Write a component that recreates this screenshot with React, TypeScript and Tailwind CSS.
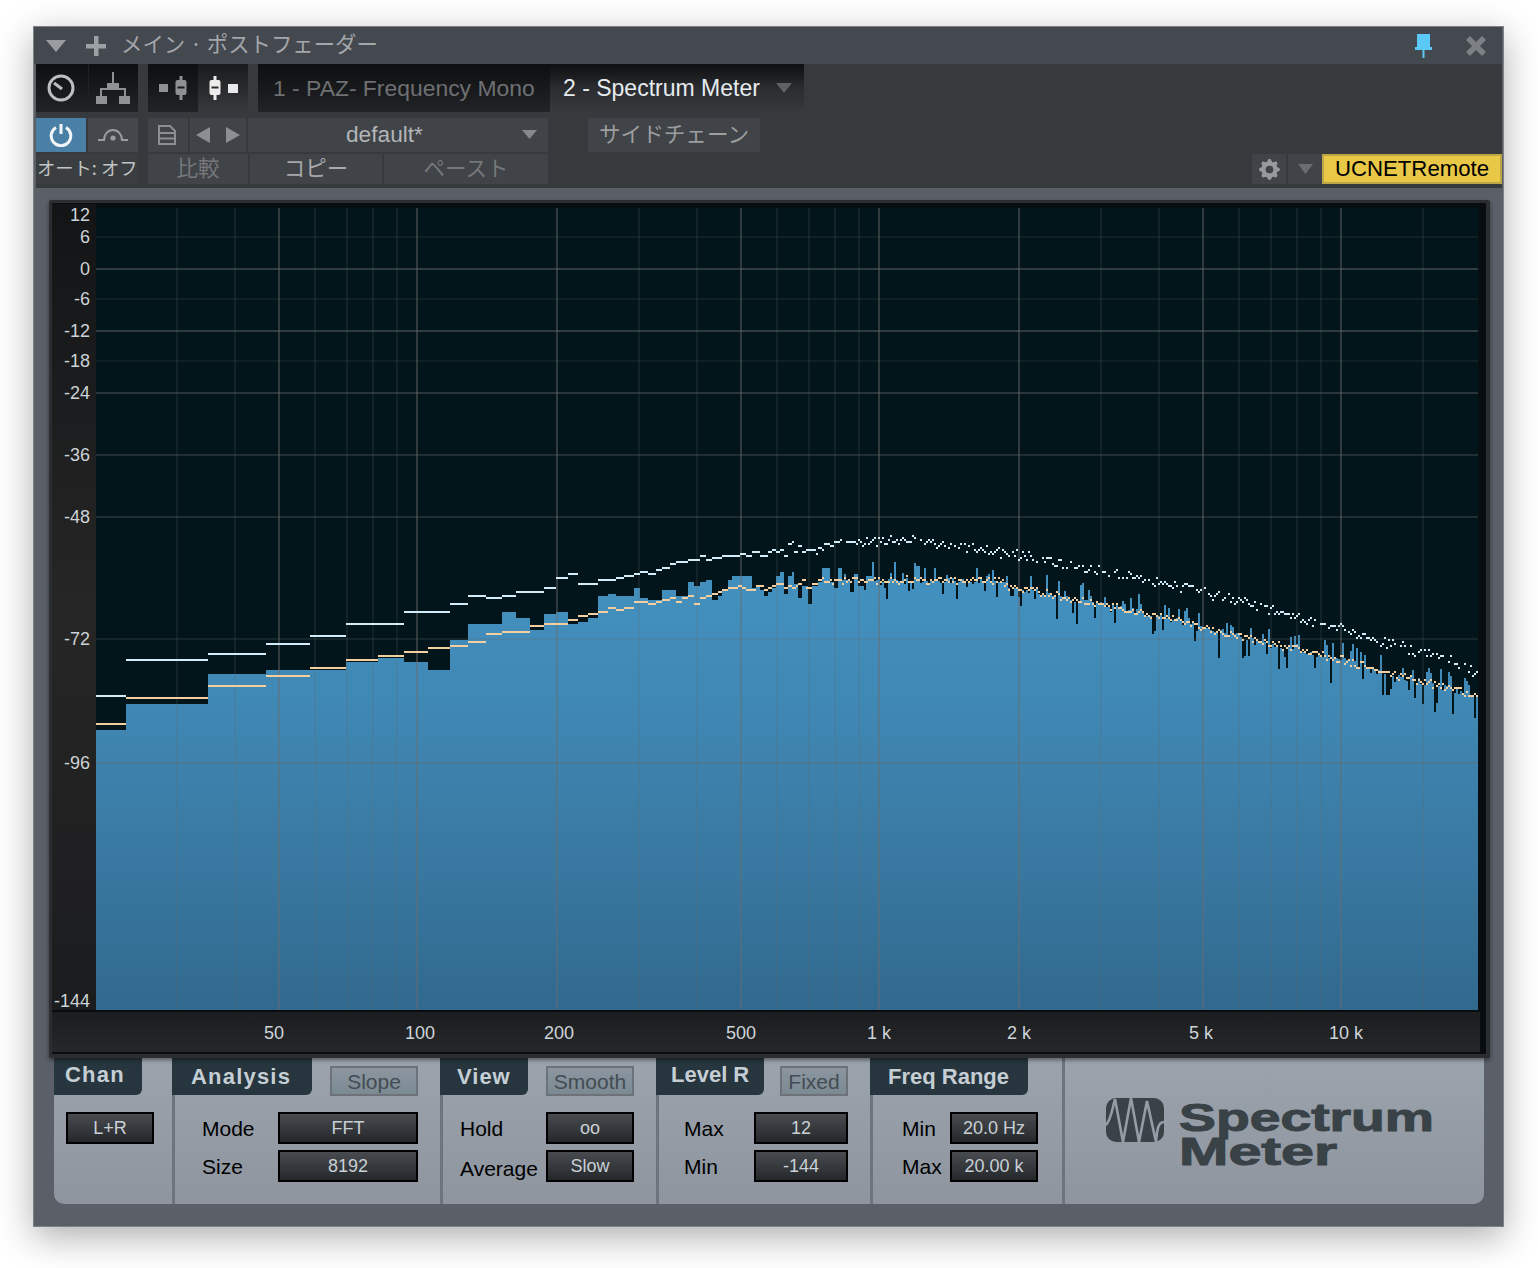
import React from "react";
import { BsGearFill } from "react-icons/bs";

const SANS = "font-[Liberation_Sans,Arial,sans-serif]";
const CJK = "font-[Noto_Sans_CJK_JP,Liberation_Sans,sans-serif]";

type Seg = [number, number];
// [end x, y] step data read from the plot; x starts at 96
const BLUE: Seg[] = [
  [126, 730], [208, 704], [266, 674], [346, 670], [378, 662], [404, 658], [428, 662], [450, 670], [468, 640],
  [502, 624], [516, 612], [530, 618], [540, 630], [544, 630], [556, 614], [568, 612], [578, 624], [588, 622],
  [598, 618], [608, 596], [616, 594], [634, 596], [640, 588], [648, 598], [662, 600], [676, 590], [688, 596],
  [694, 582], [700, 586], [706, 582], [712, 580], [718, 600], [722, 596], [728, 590], [732, 580], [752, 576],
  [756, 588], [760, 586], [764, 590], [768, 596], [772, 592], [776, 588], [780, 576], [784, 572], [788, 594],
  [792, 576], [794, 572], [796, 584], [798, 584], [802, 598], [806, 586], [808, 586], [812, 604], [818, 586],
  [822, 582], [826, 568], [828, 568], [830, 568], [834, 582], [836, 588], [838, 588], [840, 568], [842, 568],
  [844, 580], [846, 574], [850, 580], [854, 592], [858, 574], [860, 586], [864, 586], [866, 590], [872, 576],
];
const WHITE: Seg[] = [
  [126, 695], [208, 659], [266, 653], [310, 643], [346, 635], [404, 623], [450, 611], [468, 603], [486, 595],
  [502, 597], [516, 595], [540, 591], [544, 591], [556, 587], [568, 577], [578, 573], [598, 583], [616, 579],
  [624, 577], [634, 575], [640, 573], [648, 571], [656, 573], [662, 569], [670, 567], [676, 563], [688, 561],
  [700, 559], [706, 555], [712, 559], [722, 557], [740, 555], [746, 553], [752, 555], [760, 551], [768, 555],
  [772, 551], [776, 549], [780, 551], [784, 549], [788, 555], [792, 543], [794, 541], [798, 551], [802, 545],
  [806, 551], [816, 549], [818, 553], [822, 547], [824, 549], [830, 543], [834, 545], [840, 541], [842, 539],
];
const ORANGE: Seg[] = [
  [126, 723], [208, 697], [266, 685], [310, 675], [346, 667], [378, 659], [404, 655], [428, 651], [450, 647],
  [468, 645], [486, 641], [502, 633], [530, 631], [540, 625], [544, 625], [556, 623], [568, 623], [578, 619],
  [588, 615], [598, 613], [608, 611], [616, 607], [624, 609], [634, 607], [648, 601], [656, 603], [662, 601],
  [670, 599], [676, 597], [682, 601], [688, 597], [694, 595], [700, 603], [706, 597], [712, 595], [718, 593],
  [722, 591], [728, 589], [738, 587], [742, 585], [746, 587], [756, 589], [764, 585], [768, 589], [772, 587],
  [776, 585], [784, 583], [788, 587], [792, 585], [796, 587], [798, 585], [802, 583], [806, 579], [812, 587],
  [818, 583], [822, 579], [824, 577], [828, 581],
];

function stepPath(segs: Seg[], h: number) {
  let d = "";
  let x = 96;
  for (const [end, y] of segs) {
    d += `M${x} ${y}H${end}V${y + h}H${x}Z`;
    x = end;
  }
  return d;
}

function rng(seed: number) {
  let a = seed;
  return () => {
    a = (a + 0x6d2b79f5) | 0;
    let t = Math.imul(a ^ (a >>> 15), 1 | a);
    t = (t + Math.imul(t ^ (t >>> 7), 61 | t)) ^ t;
    return ((t ^ (t >>> 14)) >>> 0) / 4294967296;
  };
}

function lerp(pts: number[][], x: number) {
  for (let i = 1; i < pts.length; i++) {
    if (x <= pts[i][0]) {
      const [x0, y0] = pts[i - 1];
      const [x1, y1] = pts[i];
      return y0 + ((y1 - y0) * (x - x0)) / (x1 - x0);
    }
  }
  return pts[pts.length - 1][1];
}

const orangeCurve = [[820, 581], [880, 578], [1000, 579], [1010, 585], [1090, 600], [1170, 617], [1250, 637], [1330, 655], [1410, 677], [1478, 694]];
const whiteCurve = [[830, 545], [890, 537], [960, 546], [1010, 552], [1090, 566], [1170, 583], [1250, 602], [1290, 613], [1330, 625], [1370, 635], [1410, 648], [1450, 658], [1478, 673]];

function snap(v: number) {
  return Math.round(v / 2) * 2 + 1;
}

const r = rng(7);
let blueTail = "";
let orangeTail = "";
let whiteTail = "";
for (let x = 872; x < 1478; x += 2) {
  const o = lerp(orangeCurve, x);
  let top = o + r() * 6 - 1;
  const k = r();
  if (k < 0.24) top = o - 3 - r() * 14;
  else if (k < 0.46) top = o + 5 + r() * (x > 1050 ? 24 : 16);
  const y = Math.round(top);
  blueTail += `M${x} ${y}H${x + 2}V1010H${x}Z`;
}
for (let x = 828; x < 1478; x += 2) {
  const o = lerp(orangeCurve, x);
  const y = snap(o + (r() - 0.5) * 7);
  orangeTail += `M${x} ${y}h2v2h-2Z`;
}
for (let x = 842; x < 1478; x += 2) {
  if (r() < 0.15) continue;
  const w = lerp(whiteCurve, x);
  const y = snap(w + (r() - 0.5) * 10);
  whiteTail += `M${x} ${y}h2v2h-2Z`;
}

let bluePath = "";
{
  let x = 96;
  for (const [end, y] of BLUE) {
    bluePath += `M${x} ${y}H${end}V1010H${x}Z`;
    x = end;
  }
  bluePath += blueTail;
}

const V_MINOR = [177, 235, 315, 347, 373, 397, 639, 697, 777, 809, 835, 859, 1101, 1159, 1239, 1271, 1297, 1321, 1423];
const V_MAJOR = [279, 417, 557, 741, 879, 1019, 1203, 1341];
const H_LINES: [number, number][] = [
  [237, 0.2], [269, 0.6], [299, 0.2], [331, 0.6], [361, 0.2], [393, 0.5], [455, 0.4], [517, 0.4], [639, 0.25], [763, 0.45],
];

function Spectrum() {
  return (
    <svg width={1382} height={802} viewBox="96 208 1382 802" className="block shrink-0">
      <defs>
        <linearGradient id="specFill" gradientUnits="userSpaceOnUse" x1="0" y1="570" x2="0" y2="1010">
          <stop offset="0" stopColor="#4391c0" />
          <stop offset="0.35" stopColor="#3f86b2" />
          <stop offset="1" stopColor="#31698e" />
        </linearGradient>
      </defs>
      <rect x={96} y={208} width={1382} height={802} fill="#02151a" />
      <path d={bluePath} fill="url(#specFill)" />
      {V_MINOR.map((x) => (
        <line key={x} x1={x} x2={x} y1={208} y2={1010} stroke="#6b6b6b" strokeOpacity={0.22} strokeWidth={1.5} />
      ))}
      {V_MAJOR.map((x) => (
        <line key={x} x1={x} x2={x} y1={208} y2={1010} stroke="#6b6b6b" strokeOpacity={0.6} strokeWidth={1.5} />
      ))}
      {H_LINES.map(([y, o]) => (
        <line key={y} x1={96} x2={1478} y1={y} y2={y} stroke="#6b6b6b" strokeOpacity={o} strokeWidth={1.5} />
      ))}
      <path d={stepPath(WHITE, 2) + whiteTail} fill="#d2edf8" />
      <path d={stepPath(ORANGE, 2) + orangeTail} fill="#f3cfa0" />
    </svg>
  );
}

const Y_TICKS = [
  { t: "12", c: "top-[11px]" },
  { t: "6", c: "top-[33px]" },
  { t: "0", c: "top-[65px]" },
  { t: "-6", c: "top-[95px]" },
  { t: "-12", c: "top-[127px]" },
  { t: "-18", c: "top-[157px]" },
  { t: "-24", c: "top-[189px]" },
  { t: "-36", c: "top-[251px]" },
  { t: "-48", c: "top-[313px]" },
  { t: "-72", c: "top-[435px]" },
  { t: "-96", c: "top-[559px]" },
  { t: "-144", c: "top-[797px]" },
];

const X_TICKS = [
  { t: "50", c: "left-[222px]" },
  { t: "100", c: "left-[368px]" },
  { t: "200", c: "left-[507px]" },
  { t: "500", c: "left-[689px]" },
  { t: "1 k", c: "left-[827px]" },
  { t: "2 k", c: "left-[967px]" },
  { t: "5 k", c: "left-[1149px]" },
  { t: "10 k", c: "left-[1294px]" },
];

function Tri({ w, h, color, dir = "down" }: { w: number; h: number; color: string; dir?: "down" | "left" | "right" }) {
  const pts = dir === "down" ? `0,0 ${w},0 ${w / 2},${h}` : dir === "left" ? `${w},0 ${w},${h} 0,${h / 2}` : `0,0 0,${h} ${w},${h / 2}`;
  return (
    <svg width={w} height={h} viewBox={`0 0 ${w} ${h}`} className="block shrink-0">
      <polygon points={pts} fill={color} />
    </svg>
  );
}

function Fader({ color, body }: { color: string; body: string }) {
  return (
    <svg width={12} height={24} viewBox="0 0 12 24" className="block shrink-0">
      <rect x={4.5} y={0} width={3} height={24} fill={color} />
      <rect x={0.5} y={4} width={11} height={15} rx={2} fill={color} />
      <rect x={2.5} y={10.5} width={7} height={2} fill={body} />
    </svg>
  );
}

function TopBlock({ className = "", children }: { className?: string; children?: React.ReactNode }) {
  return <div className={`flex items-center justify-center h-full bg-gradient-to-b from-[#0e0f11] to-[#212326] ${className}`}>{children}</div>;
}

function Tab({ children, w, className = "" }: { children: React.ReactNode; w: string; className?: string }) {
  return (
    <div className={`${w} h-[37px] shrink-0 bg-[#27363e] rounded-br-[6px] text-[22px] leading-[28px] font-bold text-[#c6ced5] flex ${className}`}>
      {children}
    </div>
  );
}

function Toggle({ children, w }: { children: React.ReactNode; w: string }) {
  return (
    <div className={`${w} h-[30px] mt-[8px] shrink-0 border-2 border-[#6d7278] bg-gradient-to-b from-[#8c96a0] to-[#7b8a93] text-[21px] text-[#434c53] flex items-center justify-center leading-none`}>
      {children}
    </div>
  );
}

function Drop({ children, w }: { children: React.ReactNode; w: string }) {
  return (
    <div className={`${w} h-[32px] shrink-0 border-2 border-black bg-gradient-to-b from-[#484c50] to-[#25282b] text-[18px] text-[#c9d0d6] flex items-center justify-center leading-none pb-[1px]`}>
      {children}
    </div>
  );
}

function Label({ children, w, className = "" }: { children: React.ReactNode; w: string; className?: string }) {
  return <div className={`${w} shrink-0 text-[21px] text-black leading-none ${className}`}>{children}</div>;
}

function Section({ w, children, first = false }: { w: string; children: React.ReactNode; first?: boolean }) {
  return <div className={`${w} shrink-0 relative flex flex-col ${first ? "" : "border-l-[3px] border-[#6e747b]"}`}>{children}</div>;
}

export default function App() {
  return (
    <div className={`min-h-screen bg-white pt-[26px] pl-[33px] ${SANS}`}>
      <div className="w-[1471px] h-[1201px] border border-[#7e8185] bg-[#5a5f68] shadow-[0_10px_34px_rgba(0,0,0,0.32)] flex flex-col">
        {/* title bar */}
        <div className="h-[37px] shrink-0 bg-[#44484f] flex items-center pl-[12px] pr-[16px] mr-[1px]">
          <Tri w={20} h={12} color="#999da2" />
          <svg width={20} height={20} viewBox="0 0 20 20" className="block shrink-0 ml-[20px]">
            <rect x={8} y={0} width={4.5} height={20} fill="#9da0a4" />
            <rect x={0} y={8} width={20} height={4.5} fill="#9da0a4" />
          </svg>
          <span className={`ml-[15px] pb-[5px] text-[21.4px] leading-none text-[#a3a6aa] ${CJK}`}>メイン · ポストフェーダー</span>
          <div className="flex-1" />
          <svg width={17} height={24} viewBox="0 0 17 24" className="block shrink-0 ml-[3px]">
            <polygon points="2,0 15,0 15,13 17,13 17,16 9.5,16 9.5,24 7.5,24 7.5,16 0,16 0,13 2,13" fill="#5ac9f6" />
          </svg>
          <svg width={20} height={20} viewBox="0 0 20 20" className="block shrink-0 ml-[34px]">
            <path d="M2 2L18 18M18 2L2 18" stroke="#7d8084" strokeWidth={5.5} />
          </svg>
        </div>

        {/* toolbar */}
        <div className="h-[124px] shrink-0 bg-[#373a3d] ml-[2px] mr-[1px] flex flex-col">
          <div className="h-[48px] shrink-0 flex">
            <TopBlock className="w-[52px]">
              <svg width={28} height={28} viewBox="0 0 28 28" className="block -ml-[2px]">
                <circle cx={14} cy={14} r={12} fill="none" stroke="#bcbec0" strokeWidth={3} />
                <path d="M15 15L7 9" stroke="#bcbec0" strokeWidth={3} />
              </svg>
            </TopBlock>
            <TopBlock className="w-[50px] border-l border-[#1e2022]">
              <svg width={36} height={32} viewBox="0 0 36 32" className="block -ml-[1px]">
                <path d="M18 0V15M6 24V17H30V24" fill="none" stroke="#8f9193" strokeWidth={2} />
                <rect x={12} y={11} width={12} height={6} fill="#8f9193" />
                <rect x={1} y={24} width={11} height={8} fill="#8f9193" />
                <rect x={24} y={24} width={11} height={8} fill="#8f9193" />
              </svg>
            </TopBlock>
            <div className="w-[10px] shrink-0" />
            <TopBlock className="w-[50px] gap-[7px]">
              <div className="w-[9px] h-[8px] bg-[#8e9092]" />
              <Fader color="#8e9092" body="#1a1b1d" />
            </TopBlock>
            <div className="w-[50px] h-full flex items-center justify-center gap-[7px] bg-gradient-to-b from-[#1a1b1d] to-[#373a3d]">
              <Fader color="#ececec" body="#2a2c2e" />
              <div className="w-[10px] h-[9px] bg-[#e8e8e8]" />
            </div>
            <div className="w-[10px] shrink-0" />
            <TopBlock className="w-[292px] justify-start pl-[15px] text-[22.9px] text-[#6e7073] leading-none whitespace-nowrap">1 - PAZ- Frequency Mono</TopBlock>
            <div className="w-[254px] h-full flex items-center pl-[13px] bg-gradient-to-b from-[#0e0f11] via-[#2a2c2f] to-[#373a3d] text-[23px] text-[#e6ebef] leading-none whitespace-nowrap">
              <span>2 - Spectrum Meter</span>
              <span className="ml-[16px]"><Tri w={16} h={10} color="#5f6265" /></span>
            </div>
          </div>
          <div className="h-[34px] mt-[6px] shrink-0 flex">
            <div className="w-[50px] h-full bg-[#4a7fa6] flex items-center justify-center">
              <svg width={24} height={24} viewBox="0 0 24 24" className="block">
                <path d="M7 4.5A9.8 9.8 0 1 0 17 4.5M12 1V11" fill="none" stroke="#f2f5f7" strokeWidth={3} />
              </svg>
            </div>
            <div className="w-[50px] h-full ml-[2px] bg-[#44474b] flex items-center justify-center">
              <svg width={30} height={14} viewBox="0 0 30 14" className="block -mt-[3px]">
                <path d="M0 13H6A9 10 0 0 1 24 13H30" fill="none" stroke="#9a9c9e" strokeWidth={2} />
                <circle cx={15} cy={11} r={2.6} fill="#9a9c9e" />
              </svg>
            </div>
            <div className="w-[40px] h-full ml-[10px] bg-[#404347] flex items-center justify-center">
              <svg width={18} height={20} viewBox="0 0 18 20" className="block -ml-[2px]">
                <path d="M1 1H12L17 6V19H1ZM1 8H17M1 13.5H17" fill="none" stroke="#8c8f92" strokeWidth={2} />
              </svg>
            </div>
            <div className="w-[56px] h-full ml-[2px] bg-[#404347] flex items-center justify-center gap-[16px]">
              <Tri w={14} h={16} color="#8c8f92" dir="left" />
              <Tri w={14} h={16} color="#8c8f92" dir="right" />
            </div>
            <div className="w-[300px] h-full ml-[2px] bg-[#404347] flex items-center pr-[11px] pb-[1px] text-[22.7px] text-[#b3b5b7] leading-none">
              <span className="ml-[98px]">default*</span>
              <span className="ml-auto"><Tri w={15} h={9} color="#86898c" /></span>
            </div>
            <div className={`w-[172px] h-full ml-[40px] bg-[#404347] flex items-center justify-center pb-[5px] text-[21.6px] text-[#9c9ea0] leading-none ${CJK}`}>サイドチェーン</div>
          </div>
          <div className="h-[30px] mt-[2px] shrink-0 flex items-stretch">
            <div className={`w-[102px] flex items-center pl-px pb-[4px] text-[18.3px] text-[#c2c4c6] leading-none whitespace-nowrap bg-[#3b3e41] ${CJK}`}>オート: オフ</div>
            <div className={`w-[100px] ml-[10px] bg-[#404347] flex items-center justify-center pb-[5px] text-[21.5px] text-[#76787b] leading-none ${CJK}`}>比較</div>
            <div className={`w-[132px] ml-[2px] bg-[#404347] flex items-center justify-center pb-[5px] text-[21.5px] text-[#a6a8aa] leading-none ${CJK}`}>コピー</div>
            <div className={`w-[164px] ml-[2px] bg-[#404347] flex items-center justify-center pb-[5px] text-[21.5px] text-[#76787b] leading-none ${CJK}`}>ペースト</div>
            <div className="flex-1" />
            <div className="w-[34px] bg-[#404347] flex items-center justify-center text-[#97999c]"><BsGearFill size={21} /></div>
            <div className="w-[34px] ml-[2px] bg-[#404347] flex items-center justify-center"><Tri w={15} h={10} color="#6a6d70" /></div>
            <div className="w-[180px] bg-[#e9c747] border-2 border-[#bda646] flex items-center justify-center text-[22.2px] text-black leading-none">UCNETRemote</div>
          </div>
        </div>

        {/* meter frame */}
        <div className="relative z-10 w-[1441px] h-[858px] mt-[12px] ml-[15px] shrink-0 bg-[#2b2d30] rounded-[2px] shadow-[0_2px_4px_rgba(0,0,0,0.45)] pt-[3px] pb-[4px] pl-[3px] pr-[4px]">
          <div className="w-full h-full bg-[#070d10] pt-[1px] flex flex-col">
            <div className="h-[806px] shrink-0 flex">
              <div className="relative w-[44px] h-full shrink-0 bg-gradient-to-b from-[#121416] via-[#262626] to-[#1b1c1e] text-[18px] text-[#cdd2d6]">
                {Y_TICKS.map((t) => (
                  <span key={t.t} className={`absolute right-[6px] -translate-y-1/2 leading-none ${t.c}`}>{t.t}</span>
                ))}
              </div>
              <div className="pt-[4px]"><Spectrum /></div>
            </div>
            <div className="relative mt-[2px] h-[40px] w-[1428px] shrink-0 bg-gradient-to-b from-[#1c1d1f] to-[#26272a] text-[18px] text-[#cdd4da]">
              {X_TICKS.map((t) => (
                <span key={t.t} className={`absolute top-[12px] -translate-x-1/2 leading-none whitespace-nowrap ${t.c}`}>{t.t}</span>
              ))}
            </div>
          </div>
        </div>

        {/* controls */}
        <div className="w-[1430px] h-[146px] ml-[20px] shrink-0 rounded-b-[10px] bg-gradient-to-b from-[#9ba3ad] to-[#8e959e] flex overflow-hidden">
          <Section w="w-[118px]" first>
            <div className="h-[54px] shrink-0 flex">
              <Tab w="w-[88px]" className="pl-[11px] pt-[3px] tracking-[1.2px]">Chan</Tab>
            </div>
            <div className="ml-[12px]"><Drop w="w-[88px]">L+R</Drop></div>
          </Section>

          <Section w="w-[268px]">
            <div className="h-[54px] shrink-0 flex -ml-[3px]">
              <Tab w="w-[140px]" className="pl-[19px] pt-[5px] tracking-[1.2px]">Analysis</Tab>
              <div className="ml-[18px]"><Toggle w="w-[88px]">Slope</Toggle></div>
            </div>
            <div className="flex items-center h-[32px] pl-[27px]">
              <Label w="w-[76px]">Mode</Label>
              <Drop w="w-[140px]">FFT</Drop>
            </div>
            <div className="flex items-center h-[32px] mt-[6px] pl-[27px]">
              <Label w="w-[76px]">Size</Label>
              <Drop w="w-[140px]">8192</Drop>
            </div>
          </Section>

          <Section w="w-[216px]">
            <div className="h-[54px] shrink-0 flex -ml-[3px]">
              <Tab w="w-[88px]" className="pl-[17px] pt-[5px] tracking-[1px]">View</Tab>
              <div className="ml-[18px]"><Toggle w="w-[88px]">Smooth</Toggle></div>
            </div>
            <div className="flex items-center h-[32px] pl-[17px]">
              <Label w="w-[86px]">Hold</Label>
              <Drop w="w-[88px]">oo</Drop>
            </div>
            <div className="flex items-center h-[32px] mt-[6px] pl-[17px]">
              <Label w="w-[86px]" className="pt-[4px]">Average</Label>
              <Drop w="w-[88px]">Slow</Drop>
            </div>
          </Section>

          <Section w="w-[214px]">
            <div className="h-[54px] shrink-0 flex -ml-[3px]">
              <Tab w="w-[108px]" className="pl-[15px] pt-[3px]">Level R</Tab>
              <div className="ml-[16px]"><Toggle w="w-[68px]">Fixed</Toggle></div>
            </div>
            <div className="flex items-center h-[32px] pl-[25px]">
              <Label w="w-[70px]">Max</Label>
              <Drop w="w-[94px]">12</Drop>
            </div>
            <div className="flex items-center h-[32px] mt-[6px] pl-[25px]">
              <Label w="w-[70px]">Min</Label>
              <Drop w="w-[94px]">-144</Drop>
            </div>
          </Section>

          <Section w="w-[192px]">
            <div className="h-[54px] shrink-0 flex -ml-[3px]">
              <Tab w="w-[158px]" className="pl-[18px] pt-[5px]">Freq Range</Tab>
            </div>
            <div className="flex items-center h-[32px] pl-[29px]">
              <Label w="w-[48px]">Min</Label>
              <Drop w="w-[88px]">20.0 Hz</Drop>
            </div>
            <div className="flex items-center h-[32px] mt-[6px] pl-[29px]">
              <Label w="w-[48px]">Max</Label>
              <Drop w="w-[88px]">20.00 k</Drop>
            </div>
          </Section>

          <Section w="w-[422px]">
            <div className="flex pl-[41px] pt-[40px]">
              <svg width={58} height={44} viewBox="0 0 58 44" className="block shrink-0">
                <rect width={58} height={44} rx={10} fill="#394247" />
                <path d="M0 27C5 22 7 8 9 1L17 44L25 0L33 44L41 3L50 44C51 32 52 24 58 24" fill="none" stroke="#959ca5" strokeWidth={2.6} />
              </svg>
              <div className="ml-[15px] mt-[3px] text-[38px] font-bold text-[#394247] leading-[34px] [-webkit-text-stroke:1px_#394247]">
                <div className="origin-left scale-x-[1.455] whitespace-nowrap h-[34px]">Spectrum</div>
                <div className="origin-left scale-x-[1.56] whitespace-nowrap h-[34px]">Meter</div>
              </div>
            </div>
          </Section>
        </div>
      </div>
    </div>
  );
}
